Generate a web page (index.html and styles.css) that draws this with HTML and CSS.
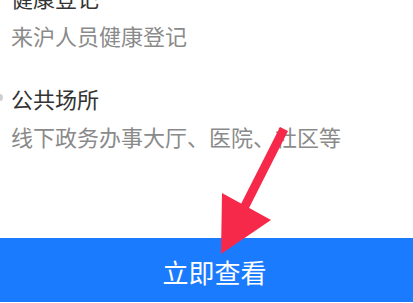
FILE: index.html
```html
<!DOCTYPE html>
<html lang="zh-CN">
<head>
<meta charset="utf-8">
<link rel="stylesheet" href="styles.css">
</head>
<body>
<div class="page">
  <ul class="list">
    <li class="item">
      <div class="title">健康登记</div>
      <div class="desc">来沪人员健康登记</div>
    </li>
    <li class="item">
      <div class="title">公共场所</div>
      <div class="desc">线下政务办事大厅、医院、社区等</div>
    </li>
  </ul>
  <div class="action">立即查看</div>
  <svg class="arrow" width="413" height="303" viewBox="0 0 413 303">
    <line x1="284" y1="129" x2="244" y2="208" stroke="#f7294b" stroke-width="9" stroke-linecap="butt"/>
    <polygon points="222,193 271,220 221,254" fill="#f7294b"/>
  </svg>
</div>
</body>
</html>
```
FILE: styles.css
```css
html, body {
  margin: 0;
  padding: 0;
  background: #ffffff;
}
.page {
  position: relative;
  width: 413px;
  height: 303px;
  overflow: hidden;
  font-family: "Noto Sans CJK SC", "Noto Sans", sans-serif;
}
.list {
  list-style: none;
  margin: -22px 0 0 0;
  padding: 0 0 0 11px;
  display: flex;
  flex-direction: column;
  gap: 25px;
}
.item {
  display: flex;
  flex-direction: column;
}
.title {
  position: relative;
  font-size: 22px;
  line-height: 38px;
  color: #333333;
}
.title::before {
  content: "";
  position: absolute;
  left: -15px;
  top: 15px;
  width: 7px;
  height: 7px;
  border-radius: 50%;
  background: #cfcfcf;
}
.desc {
  font-size: 22px;
  line-height: 38px;
  color: #8a8a8a;
}
.action {
  margin-top: 83px;
  height: 64px;
  box-sizing: border-box;
  padding: 21px 0 0 16px;
  background: #1b7bff;
  color: #ffffff;
  font-size: 26px;
  line-height: 26px;
  text-align: center;
}
.arrow {
  position: absolute;
  left: 0;
  top: 0;
  pointer-events: none;
}
```
